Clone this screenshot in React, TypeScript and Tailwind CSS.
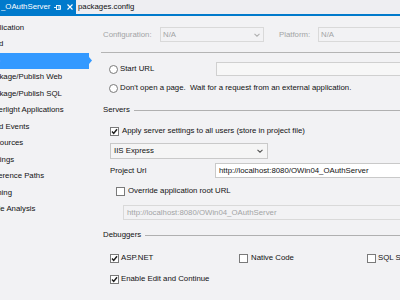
import React from "react";

const Check = ({ checked }: { checked?: boolean }) => (
  <span className="w-[9px] h-[9px] shrink-0 border border-[#7a7a7a] bg-white flex items-center justify-center">
    {checked && (
      <svg width="7" height="7" viewBox="0 0 7 7">
        <path d="M1 3.6 L2.7 5.4 L6 1.2" stroke="#1e1e1e" strokeWidth="1.5" fill="none" />
      </svg>
    )}
  </span>
);

const Radio = () => (
  <span className="block w-[9px] h-[9px] shrink-0 rounded-full border border-[#7a7a7a] bg-white" />
);

const Chevron = ({ color = "#707070" }: { color?: string }) => (
  <svg width="6" height="4" viewBox="0 0 6 4">
    <path d="M0.5 0.8 L3 3.2 L5.5 0.8" stroke={color} strokeWidth="1.1" fill="none" />
  </svg>
);

const Heading = ({ label }: { label: string }) => (
  <div className="h-[14px] flex items-center pl-[2px] gap-[4px]">
    <span className="shrink-0">{label}</span>
    <span className="flex-1 h-px bg-[#b0b0b0]" />
  </div>
);

const items = [
  "Application",
  "Build",
  "Web",
  "Package/Publish Web",
  "Package/Publish SQL",
  "Silverlight Applications",
  "Build Events",
  "Resources",
  "Settings",
  "Reference Paths",
  "Signing",
  "Code Analysis",
];

export default function App() {
  return (
    <div className="w-[400px] h-[300px] overflow-hidden bg-[#f2f2f4] font-['Liberation_Sans',Arial,sans-serif] text-[7.8px] leading-none text-[#111]">
      {/* tab bar */}
      <div className="h-[14px] flex items-stretch bg-[#eeeef2]">
        <div className="w-[76px] shrink-0 bg-[#007acc] text-white flex items-center pl-[1px]">
          <span className="w-[50px] shrink-0 whitespace-nowrap overflow-hidden">_OAuthServer</span>
          <svg width="8" height="7" viewBox="0 0 8 7" className="ml-[3px] shrink-0">
            <path d="M0 3.5 H2.5 M2.5 1 V6 M2.5 1.5 H6.5 V5.5 H2.5 M5 1.5 V5.5" stroke="white" strokeWidth="0.9" fill="none" />
          </svg>
          <svg width="6" height="6" viewBox="0 0 6 6" className="ml-[5px] shrink-0">
            <path d="M0.5 0.5 L5.5 5.5 M5.5 0.5 L0.5 5.5" stroke="white" strokeWidth="1.1" />
          </svg>
        </div>
        <div className="flex items-center pl-[2px]">packages.config</div>
      </div>
      <div className="h-[2px] bg-[#007acc]" />

      {/* body */}
      <div className="flex">
        {/* sidebar */}
        <div className="w-[92px] shrink-0 overflow-hidden pt-[3.5px]">
          {items.map((it, i) =>
            i === 2 ? (
              <div key={it} className="h-[16.5px] flex items-center">
                <div className="w-[89px] shrink-0 h-full bg-[#3399ff] flex items-center text-white">
                  <span className="ml-[-16px] whitespace-nowrap">{it}</span>
                </div>
                <svg width="3" height="7" viewBox="0 0 3 7" className="shrink-0">
                  <path d="M0 0 L3 3.5 L0 7 Z" fill="#3399ff" />
                </svg>
              </div>
            ) : (
              <div key={it} className="h-[16.5px] flex items-center">
                <span className="ml-[-14px] whitespace-nowrap">{it}</span>
              </div>
            )
          )}
        </div>

        {/* content */}
        <div className="flex-1 min-w-0 pl-[9px] pt-[11px] flex flex-col">
          {/* configuration row */}
          <div className="h-[15px] flex items-center text-[#a2a4a5] whitespace-nowrap">
            <span className="pl-[2px] w-[59px] shrink-0">Configuration:</span>
            <div className="w-[104px] shrink-0 h-full border border-[#d9d9d9] flex items-center justify-between pl-[2px] pr-[3px]">
              <span>N/A</span>
              <Chevron color="#b0b0b0" />
            </div>
            <span className="ml-[15px] w-[39px] shrink-0">Platform:</span>
            <div className="flex-1 h-full border border-[#d9d9d9] border-r-0 flex items-center pl-[2px]">
              <span>N/A</span>
            </div>
          </div>

          <div className="mt-[10px] h-px bg-[#b4b4b4]" />

          {/* start url */}
          <div className="mt-[9px] h-[14px] flex items-center whitespace-nowrap">
            <span className="ml-[8px] shrink-0"><Radio /></span>
            <span className="ml-[2px] w-[96px] shrink-0">Start URL</span>
            <div className="flex-1 h-full border border-[#d0d0d0] border-r-0 bg-[#f7f7f7]" />
          </div>

          <div className="mt-[5px] h-[14px] flex items-center whitespace-pre">
            <span className="ml-[8px] shrink-0"><Radio /></span>
            <span className="ml-[2px]">Don't open a page.  Wait for a request from an external application.</span>
          </div>

          <div className="mt-[8px]">
            <Heading label="Servers" />
          </div>

          <div className="mt-[7px] h-[14px] flex items-center whitespace-nowrap">
            <span className="ml-[9px] shrink-0"><Check checked /></span>
            <span className="ml-[3px]">Apply server settings to all users (store in project file)</span>
          </div>

          <div className="mt-[5px] ml-[9px] w-[158px] h-[16px] border border-[#c9c9c9] bg-[#f5f5f5] flex items-center justify-between pl-[3px] pr-[4px]">
            <span>IIS Express</span>
            <Chevron color="#555" />
          </div>

          <div className="mt-[4px] h-[15px] flex items-center whitespace-nowrap">
            <span className="ml-[9px] w-[105px] shrink-0">Project Url</span>
            <div className="flex-1 h-full border border-[#c9c9c9] border-r-0 bg-white flex items-center pl-[3px]">
              http://localhost:8080/OWin04_OAuthServer
            </div>
          </div>

          <div className="mt-[6px] h-[14px] flex items-center whitespace-nowrap">
            <span className="ml-[15px] shrink-0"><Check /></span>
            <span className="ml-[3px]">Override application root URL</span>
          </div>

          <div className="mt-[7px] ml-[22px] h-[15px] border border-[#d9d9d9] border-r-0 flex items-center pl-[3px] text-[#a2a4a5] whitespace-nowrap">
            http://localhost:8080/OWin04_OAuthServer
          </div>

          <div className="mt-[8px]">
            <Heading label="Debuggers" />
          </div>

          <div className="mt-[9px] h-[14px] flex items-center whitespace-nowrap">
            <span className="ml-[9px] shrink-0"><Check checked /></span>
            <span className="ml-[2px] w-[118px] shrink-0">ASP.NET</span>
            <Check />
            <span className="ml-[3px] w-[116px] shrink-0">Native Code</span>
            <Check />
            <span className="ml-[2px] shrink-0">SQL Server</span>
          </div>

          <div className="mt-[7px] h-[14px] flex items-center whitespace-nowrap">
            <span className="ml-[9px] shrink-0"><Check checked /></span>
            <span className="ml-[2px]">Enable Edit and Continue</span>
          </div>
        </div>
      </div>
    </div>
  );
}
